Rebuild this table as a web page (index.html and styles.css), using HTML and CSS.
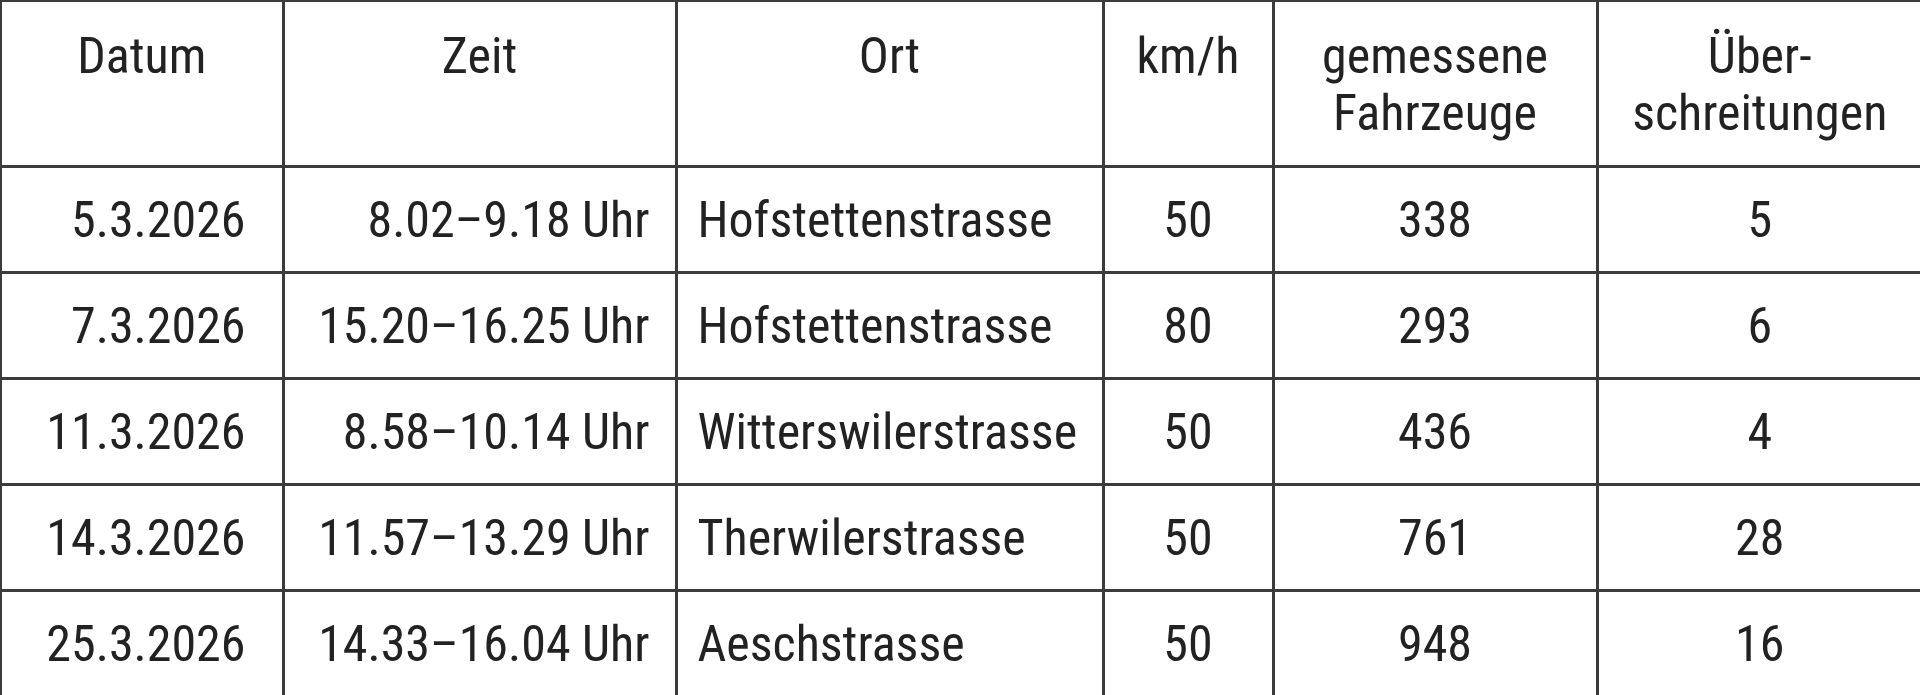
FILE: index.html
```html
<!DOCTYPE html>
<html lang="de">
<head>
<meta charset="utf-8">
<title>Geschwindigkeitsmessungen</title>
<link rel="stylesheet" href="styles.css">
</head>
<body>
<table class="grid">
  <colgroup>
    <col class="c-datum">
    <col class="c-zeit">
    <col class="c-ort">
    <col class="c-kmh">
    <col class="c-anzahl">
    <col class="c-ueber">
  </colgroup>
  <thead>
    <tr class="head-row">
      <th>Datum</th>
      <th>Zeit</th>
      <th>Ort</th>
      <th>km/h</th>
      <th>gemessene<br>Fahrzeuge</th>
      <th>Über-<br>schreitungen</th>
    </tr>
  </thead>
  <tbody>
    <tr class="data-row">
      <td class="datum">5.3.2026</td>
      <td class="zeit">8.02–9.18 Uhr</td>
      <td class="ort">Hofstettenstrasse</td>
      <td class="num">50</td>
      <td class="num">338</td>
      <td class="num">5</td>
    </tr>
    <tr class="data-row">
      <td class="datum">7.3.2026</td>
      <td class="zeit">15.20–16.25 Uhr</td>
      <td class="ort">Hofstettenstrasse</td>
      <td class="num">80</td>
      <td class="num">293</td>
      <td class="num">6</td>
    </tr>
    <tr class="data-row">
      <td class="datum">11.3.2026</td>
      <td class="zeit">8.58–10.14 Uhr</td>
      <td class="ort">Witterswilerstrasse</td>
      <td class="num">50</td>
      <td class="num">436</td>
      <td class="num">4</td>
    </tr>
    <tr class="data-row">
      <td class="datum">14.3.2026</td>
      <td class="zeit">11.57–13.29 Uhr</td>
      <td class="ort">Therwilerstrasse</td>
      <td class="num">50</td>
      <td class="num">761</td>
      <td class="num">28</td>
    </tr>
    <tr class="data-row">
      <td class="datum">25.3.2026</td>
      <td class="zeit">14.33–16.04 Uhr</td>
      <td class="ort">Aeschstrasse</td>
      <td class="num">50</td>
      <td class="num">948</td>
      <td class="num">16</td>
    </tr>
  </tbody>
</table>
</body>
</html>
```
FILE: styles.css
```css
html, body {
  margin: 0;
  padding: 0;
  background: #ffffff;
}

.grid {
  border-collapse: collapse;
  table-layout: fixed;
  width: 1920px;
  font-family: Roboto, "Open Sans", sans-serif;
  font-stretch: 87.5%;
  font-size: 50px;
  line-height: 57px;
  color: #222222;
}

.c-datum { width: 282px; }
.c-zeit { width: 393px; }
.c-ort { width: 427px; }
.c-kmh { width: 170px; }
.c-anzahl { width: 324px; }
.c-ueber { width: 324px; }

.grid th,
.grid td {
  border: 3px solid #3b3b3b;
  padding: 0;
  white-space: nowrap;
}

.grid th:first-child,
.grid td:first-child {
  border-left-width: 2px;
}

.grid th:last-child,
.grid td:last-child {
  border-right: none;
}

.grid th {
  border-top-width: 2px;
}

.head-row {
  height: 165px;
}

.head-row th {
  font-weight: normal;
  text-align: center;
  vertical-align: top;
  padding-top: 26px;
}

.data-row {
  height: 106px;
}

.data-row td {
  vertical-align: middle;
  padding-top: 3px;
}

.grid tbody tr:last-child td {
  border-bottom-width: 2px;
}

.grid .datum {
  text-align: right;
  padding-right: 36px;
}

.grid .zeit {
  text-align: right;
  padding-right: 25px;
}

.grid .ort {
  text-align: left;
  padding-left: 20px;
}

.grid .num {
  text-align: center;
}
```
